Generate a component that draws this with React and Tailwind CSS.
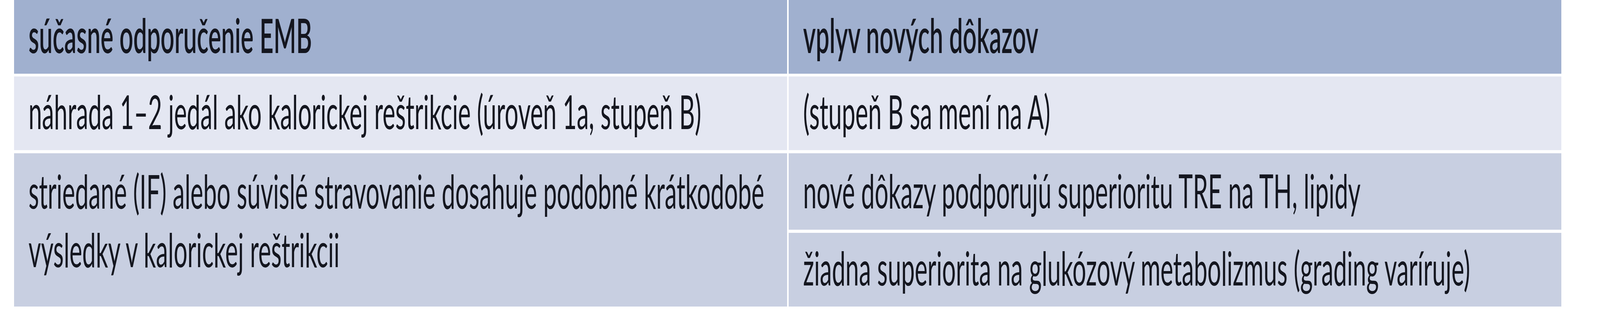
import React from 'react';

const Cell = ({ className = '', children }) => (
  <div className={`min-w-0 pl-[37px] text-[121px] leading-[150px] text-[#14161f] ${className}`}>
    <span className="inline-block whitespace-nowrap origin-left scale-x-[0.512]">{children}</span>
  </div>
);

const App = () => {
  return (
    <div className="min-h-screen bg-white font-['Lato',sans-serif] overflow-hidden">
      <div className="ml-[36px] w-[3961px] flex flex-col">
        {/* Header */}
        <div className="grid grid-cols-2 gap-x-[4px] h-[189px]">
          <Cell className="bg-[#a0b0cf] pt-[15px] font-semibold">súčasné odporučenie EMB</Cell>
          <Cell className="bg-[#a0b0cf] pt-[15px] font-semibold">vplyv nových dôkazov</Cell>
        </div>

        {/* Row 1 */}
        <div className="grid grid-cols-2 gap-x-[4px] h-[189px] mt-[7px]">
          <Cell className="bg-[#e4e7f2] pt-[14px]">
            náhrada 1–2 jedál ako kalorickej reštrikcie (úroveň 1a, stupeň B)
          </Cell>
          <Cell className="bg-[#e4e7f2] pt-[14px]">(stupeň B sa mení na A)</Cell>
        </div>

        {/* Row 2 */}
        <div className="grid grid-cols-2 gap-x-[4px] h-[393px] mt-[8px]">
          <Cell className="bg-[#c8cfe1] pt-[21px]">
            striedané (IF) alebo súvislé stravovanie dosahuje podobné krátkodobé
            <br />
            výsledky v kalorickej reštrikcii
          </Cell>
          <div className="min-w-0 flex flex-col gap-[8px]">
            <Cell className="h-[196px] bg-[#c8cfe1] pt-[20px]">
              nové dôkazy podporujú superioritu TRE na TH, lipidy
            </Cell>
            <Cell className="h-[189px] bg-[#c8cfe1] pt-[14px]">
              žiadna superiorita na glukózový metabolizmus (grading varíruje)
            </Cell>
          </div>
        </div>
      </div>
    </div>
  );
};

export default App;
